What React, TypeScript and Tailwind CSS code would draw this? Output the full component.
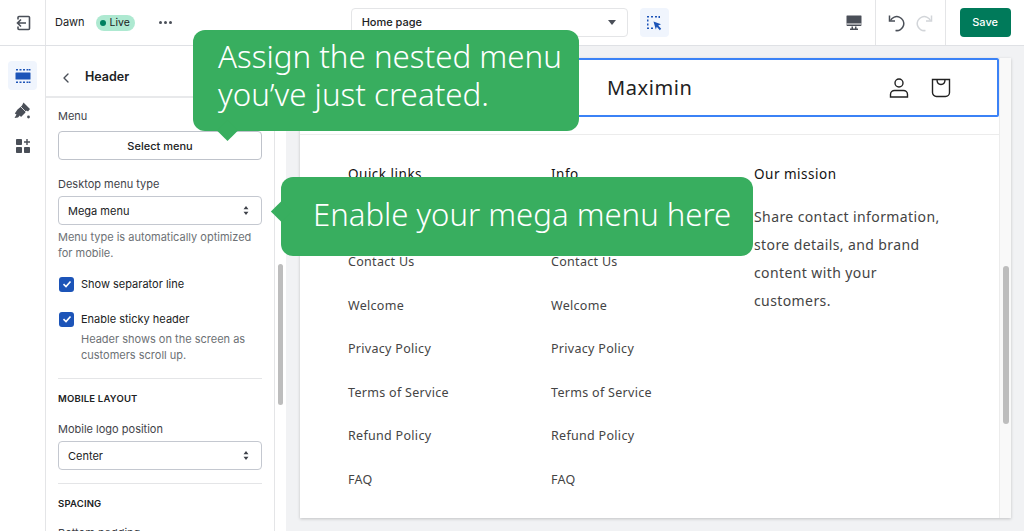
import { ChevronLeft } from "lucide-react";

const links = ["Contact Us", "Welcome", "Privacy Policy", "Terms of Service", "Refund Policy", "FAQ"];

function ExitIcon() {
  return (
    <svg width="16" height="16" viewBox="0 0 16 16" fill="none" stroke="#4a4f58" strokeWidth="1.6">
      <path d="M3 4.5V2.5a1 1 0 0 1 1-1h9.500a1 1 0 0 1 1 1v11a1 1 0 0 1-1 1H4a1 1 0 0 1-1-1v-2" />
      <path d="M11 8H2.500M6 4.500 2.500 8 6 11.500" />
    </svg>
  );
}

function SectionsIcon() {
  return (
    <svg width="16" height="16" viewBox="0 0 16 16" fill="#1c54b8">
      <rect x="0.500" y="4.500" width="15" height="7" rx="0.500" />
      <path d="M1 1h2v1.500H1zM4.500 1h2v1.500h-2zM8 1h2v1.500H8zM11.500 1h2v1.500h-2zM14 1h1.500v1.500H14zM1 13.500h2V15H1zM4.500 13.500h2V15h-2zM8 13.500h2V15H8zM11.500 13.500h2V15h-2zM14 13.500h1.500V15H14z" />
    </svg>
  );
}

function BrushIcon() {
  return (
    <svg width="17" height="17" viewBox="0 0 17 17" fill="#4a4f58">
      <path d="M9.500 .500 16 7 14 9.500 12.500 8.500 11 11 9.500 12.500 7 15 5.800 13.500 4 15.500 .500 16 2.500 12.500 .800 11.500 3.500 7.500 6.500 5 8 3.500z" />
      <path d="M6.500 4.500 12.500 10.500" stroke="#ffffff" strokeWidth="0.800" />
      <circle cx="14.500" cy="15" r="1.400" />
    </svg>
  );
}

function AppsIcon() {
  return (
    <svg width="16" height="16" viewBox="0 0 16 16" fill="#4a4f58">
      <rect x="1" y="1" width="6" height="6" rx="0.800" />
      <rect x="1" y="9" width="6" height="6" rx="0.800" />
      <rect x="9" y="9" width="6" height="6" rx="0.800" />
      <path d="M11.300 1h1.400v2.300H15v1.400h-2.300V7h-1.400V4.700H9V3.300h2.300z" />
    </svg>
  );
}

function InspectIcon() {
  return (
    <svg width="16" height="16" viewBox="0 0 16 16" fill="#1c54b8">
      <path d="M1 1h2v1.500H1zM5 1h2v1.500H5zM9 1h2v1.500H9zM12.500 1H14v2h-1.500zM1 4.500h1.500v2H1zM1 8.500h1.500v2H1zM1 12.500h2V14H1zM5 12.500h2V14H5z" />
      <path d="M7.500 6.500 15 9.200 12.200 10.400 15.200 13.800 13.800 15.200 10.800 11.800 9.800 14.500z" />
    </svg>
  );
}

function DesktopIcon() {
  return (
    <svg width="16" height="16" viewBox="0 0 16 16" fill="#4a4f58">
      <path d="M1 0.500h14a.5.5 0 0 1 .5.500v9a1 1 0 0 1-1 1H1.500a1 1 0 0 1-1-1V1a.5.5 0 0 1 .5-.5z" />
      <rect x="0.500" y="8.500" width="15" height="1" fill="#ffffff" />
      <path d="M5.500 11.500h1.500v2h2v-2h1.500v2H12V15H4v-1.500h1.500z" />
    </svg>
  );
}

function UndoIcon({ color, flip }: { color: string; flip?: boolean }) {
  return (
    <svg width="18" height="18" viewBox="0 0 18 18" fill="none" stroke={color} strokeWidth="1.500" className={flip ? "-scale-x-100" : ""}>
      <path d="M3.500 6.500A7 7 0 1 1 8.500 16.500" />
      <path d="M2.500 1.500V7H8" />
    </svg>
  );
}

function SelectArrows() {
  return (
    <svg width="6" height="9" viewBox="0 0 7 11" fill="#3d4149">
      <path d="M3.500 0 6.500 4H.5zM3.500 11 .5 7h6z" />
    </svg>
  );
}

function Checkbox({ label }: { label: string }) {
  return (
    <div className="flex items-center gap-[7px]">
      <span className="ml-[1px] flex h-[15px] w-[15px] items-center justify-center rounded-[3px] bg-[#1c54b8]">
        <svg width="10" height="10" viewBox="0 0 10 10" fill="none" stroke="#ffffff" strokeWidth="1.600">
          <path d="M1.500 5.200 4 7.500 8.500 2.500" />
        </svg>
      </span>
      <span className="text-[11px] leading-[16px] text-[#202223]">{label}</span>
    </div>
  );
}

function SelectBox({ value }: { value: string }) {
  return (
    <div className="flex h-[29px] items-center justify-between rounded-[4px] border border-[#c4c8d0] pl-[9px] pr-[12px] text-[11px] text-[#202223]">
      <span className="pt-[1px]">{value}</span>
      <SelectArrows />
    </div>
  );
}

function FooterColumn({ title }: { title: string }) {
  return (
    <div className="w-[203px]">
      <div className="text-[13.500px] leading-[20px] tracking-[0.5px] text-[#121212]">{title}</div>
      <div className="mt-[68px] flex flex-col gap-[23.600px]">
        {links.map((l) => (
          <div key={l} className="text-[12.500px] leading-[20px] tracking-[0.3px] text-[#444444]">
            {l}
          </div>
        ))}
      </div>
    </div>
  );
}

export default function App() {
  return (
    <div className="relative flex h-[531px] w-[1024px] flex-col overflow-hidden bg-white font-['Inter',sans-serif]">
      {/* Top bar */}
      <div className="flex h-[46px] shrink-0 items-center border-b border-[#dfe1e5]">
        <div className="flex h-full w-[46px] items-center justify-center border-r border-[#e4e5e7]">
          <ExitIcon />
        </div>
        <span className="ml-[9px] text-[11px] text-[#202223]">Dawn</span>
        <span className="ml-[11px] flex h-[16px] w-[39px] items-center justify-center gap-[3px] rounded-full bg-[#aee9d1] text-[10.500px] text-[#202223]">
          <span className="h-[6px] w-[6px] rounded-full bg-[#007f5f]" />
          Live
        </span>
        <span className="ml-[24px] flex gap-[2px]">
          <span className="h-[3px] w-[3px] rounded-full bg-[#4a4f58]" />
          <span className="h-[3px] w-[3px] rounded-full bg-[#4a4f58]" />
          <span className="h-[3px] w-[3px] rounded-full bg-[#4a4f58]" />
        </span>
        <div className="ml-[179px] flex h-[29px] w-[277px] items-center justify-between rounded-[4px] border border-[#e4e5e7] pl-[10px] pr-[11px] text-[11px] font-medium text-[#202223]">
          Home page
          <span className="h-0 w-0 border-x-[4.500px] border-t-[5px] border-x-transparent border-t-[#4a4f58]" />
        </div>
        <div className="ml-[12px] flex h-[29px] w-[29px] items-center justify-center rounded-[4px] bg-[#f0f5fd]">
          <InspectIcon />
        </div>
        <div className="ml-[177px]">
          <DesktopIcon />
        </div>
        <div className="ml-[13px] flex h-full w-[71px] items-center justify-center gap-[11px] border-x border-[#e4e5e7]">
          <UndoIcon color="#4a4f58" />
          <UndoIcon color="#d2d5d9" flip />
        </div>
        <div className="ml-[14px] flex h-[29px] w-[51px] items-center justify-center rounded-[4px] bg-[#007a5a] text-[11px] font-medium text-white">
          Save
        </div>
      </div>

      <div className="flex min-h-0 flex-1">
        {/* Rail */}
        <div className="flex w-[46px] shrink-0 flex-col items-center gap-[6px] border-r border-[#e4e5e7] pt-[15px]">
          <div className="flex h-[29px] w-[29px] items-center justify-center rounded-[4px] bg-[#f0f5fd]">
            <SectionsIcon />
          </div>
          <div className="flex h-[29px] items-center"><BrushIcon /></div>
          <div className="flex h-[29px] items-center"><AppsIcon /></div>
        </div>

        {/* Settings panel */}
        <div className="w-[228px] shrink-0 overflow-hidden">
          <div className="flex h-[52px] items-center gap-[11px] border-b-2 border-[#e8e9eb] pl-[12px] pt-[13px] text-[12.500px] font-semibold text-[#202223]">
            <ChevronLeft size={16} color="#4a4f58" />
            Header
          </div>
          <div className="px-[12px] pt-[10px]">
            <div className="text-[11px] leading-[16px] text-[#3f4349]">Menu</div>
            <div className="mt-[7px] flex h-[29px] items-center justify-center rounded-[4px] border border-[#bfc3cb] pt-[1px] text-[11px] font-medium text-[#202223]">
              Select menu
            </div>
            <div className="mt-[16px] text-[11px] leading-[16px] text-[#3f4349]">Desktop menu type</div>
            <div className="mt-[4px]"><SelectBox value="Mega menu" /></div>
            <div className="mt-[4px] text-[11px] leading-[16px] text-[#6d7175]">
              Menu type is automatically optimized for mobile.
            </div>
            <div className="mt-[15px]"><Checkbox label="Show separator line" /></div>
            <div className="mt-[19px]"><Checkbox label="Enable sticky header" /></div>
            <div className="mt-[4px] pl-[23px] text-[11px] leading-[16px] text-[#6d7175]">
              Header shows on the screen as customers scroll up.
            </div>
            <div className="mt-[15px] border-t border-[#e4e5e7]" />
            <div className="mt-[13px] text-[9.500px] font-semibold leading-[14px] tracking-[0.2px] text-[#202223]">MOBILE LAYOUT</div>
            <div className="mt-[15px] text-[11px] leading-[16px] text-[#3f4349]">Mobile logo position</div>
            <div className="mt-[4px]"><SelectBox value="Center" /></div>
            <div className="mt-[13px] border-t border-[#e4e5e7]" />
            <div className="mt-[13px] text-[9.500px] font-semibold leading-[14px] tracking-[0.2px] text-[#202223]">SPACING</div>
            <div className="mt-[14px] text-[11px] leading-[16px] text-[#3f4349]">Bottom padding</div>
          </div>
        </div>

        {/* Panel scrollbar */}
        <div className="w-[12px] shrink-0 border-l border-[#e4e5e7] pl-[3px] pt-[218px]">
          <div className="h-[141px] w-[5px] rounded-full bg-[#bdbdbd]" />
        </div>

        {/* Preview */}
        <div className="flex min-w-0 flex-1 bg-[#f1f2f4] pl-[14px] pr-[13px] pt-[12px] pb-[13px]">
          <div className="flex flex-1 bg-white shadow-[0_1px_3px_rgba(0,0,0,0.2)]">
            <div className="min-w-0 flex-1">
              <div className="flex h-[59px] items-center rounded-[2px] border-[2.500px] border-[#3b82f6] pl-[305px] pr-[46px]">
                <span className="flex-1 pt-[1px] font-['Noto_Sans',sans-serif] text-[20px] tracking-[0.6px] text-[#222222]">Maximin</span>
                <svg width="20" height="20" viewBox="0 0 20 20" fill="none" stroke="#222222" strokeWidth="1.400">
                  <circle cx="10" cy="5" r="4" />
                  <path d="M1.500 19v-2.500c0-2.500 2-4 4-4h9c2 0 4 1.500 4 4V19z" />
                </svg>
                <svg className="ml-[22px]" width="20" height="20" viewBox="0 0 20 20" fill="none" stroke="#222222" strokeWidth="1.400">
                  <path d="M1.500 1.500h17v13a4 4 0 0 1-4 4h-9a4 4 0 0 1-4-4z" />
                  <path d="M6 1.500c0 3 1.500 5 4 5s4-2 4-5" />
                </svg>
              </div>
              <div className="mt-[17px] border-t border-[#ececec]" />
              <div className="flex pl-[48px] pt-[29px] font-['Noto_Sans',sans-serif]">
                <FooterColumn title="Quick links" />
                <FooterColumn title="Info" />
                <div className="w-[200px]">
                  <div className="text-[13.500px] leading-[20px] tracking-[0.5px] text-[#121212]">Our mission</div>
                  <div className="mt-[19px] text-[14px] leading-[28px] tracking-[0.4px] text-[#444444]">
                    Share contact information, store details, and brand content with your customers.
                  </div>
                </div>
              </div>
            </div>
            <div className="w-[12px] shrink-0 border-l border-[#ececec] bg-[#f9f9f9] pl-[3px] pt-[208px]">
              <div className="h-[158px] w-[6px] rounded-full bg-[#bdbdbd]" />
            </div>
          </div>
        </div>
      </div>

      {/* Callouts */}
      <div className="absolute left-[193px] top-[30px] flex h-[101px] w-[386px] flex-col justify-center rounded-[12px] bg-[#38ae5f] pb-[12px] pl-[25px] font-['Noto_Sans',sans-serif] text-[31.300px] font-light leading-[38px] text-white">
        <span>Assign the nested menu</span>
        <span>you’ve just created.</span>
        <span className="absolute left-[27px] top-[93px] h-[15px] w-[15px] rotate-45 bg-[#38ae5f]" />
      </div>
      <div className="absolute left-[281px] top-[177px] flex h-[79px] w-[472px] items-center rounded-[12px] bg-[#38ae5f] pb-[4px] pl-[32px] font-['Noto_Sans',sans-serif] text-[31.100px] font-light text-white">
        <span>Enable your mega menu here</span>
        <span className="absolute left-[-7px] top-[27px] h-[15px] w-[15px] rotate-45 bg-[#38ae5f]" />
      </div>
    </div>
  );
}
